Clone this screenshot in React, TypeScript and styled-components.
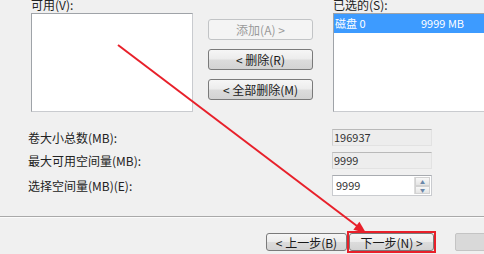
import React from "react";
import styled, { createGlobalStyle, css } from "styled-components";

const Global = createGlobalStyle`
  html, body { margin: 0; padding: 0; background: #f0f0f0; }
  body {
    font-family: "Noto Sans CJK SC", "DejaVu Sans", sans-serif;
    font-size: 12px;
    color: #1a1a1a;
  }
`;

const Frame = styled.div`
  position: relative;
  width: 484px;
  height: 254px;
  overflow: hidden;
  background: #f0f0f0;
  display: flex;
  flex-direction: column;
`;

const Top = styled.div`
  display: flex;
  margin-top: -4px;
  padding-left: 31px;
`;

const ListColumn = styled.div<{ $w: number }>`
  display: flex;
  flex-direction: column;
  width: ${(p) => p.$w}px;
  flex-shrink: 0;
`;

const Label = styled.div`
  height: 17px;
  line-height: 17px;
  white-space: nowrap;
  color: #222;
`;

const ListBox = styled.div`
  height: 99px;
  box-sizing: border-box;
  background: #fff;
  border: 1px solid #9fa3a8;
  border-right-color: #c9cbcf;
  border-bottom-color: #c9cbcf;
`;

const Row = styled.div`
  display: grid;
  grid-template-columns: 86px auto;
  height: 19px;
  line-height: 19px;
  background: #3d9bff;
  color: #fff;
  font-size: 11px;
  padding-left: 1px;
  white-space: nowrap;
`;

const ButtonColumn = styled.div`
  display: flex;
  flex-direction: column;
  gap: 9px;
  width: 105px;
  margin: 0 20px 0 15px;
  padding-top: 23px;
  flex-shrink: 0;
`;

const Btn = styled.div<{ $disabled?: boolean; $w?: number; $h?: number }>`
  box-sizing: border-box;
  height: ${(p) => p.$h ?? 21}px;
  ${(p) => p.$w && css`width: ${p.$w}px;`}
  border: 1px solid #7a7a7a;
  border-radius: 3px;
  background: linear-gradient(#f6f6f6 0%, #ececec 48%, #dcdcdc 52%, #d3d3d3 100%);
  display: flex;
  align-items: center;
  justify-content: center;
  white-space: nowrap;
  color: #1a1a1a;
  flex-shrink: 0;
  ${(p) =>
    p.$disabled &&
    css`
      border-color: #c2c4c6;
      background: #f4f4f4;
      color: #9a9a9a;
    `}
`;

const Lower = styled.div`
  display: grid;
  grid-template-columns: 304px 100px;
  grid-template-rows: 17px 17px 21px;
  row-gap: 6px;
  padding-left: 28px;
  margin-top: 17px;
  align-items: center;
`;

const FieldLabel = styled.div`
  white-space: nowrap;
  color: #222;
`;

const ReadOnly = styled.div`
  box-sizing: border-box;
  height: 17px;
  line-height: 15px;
  padding-left: 1px;
  background: #ededed;
  border: 1px solid #e2e2e2;
  border-top-color: #b9b9b9;
  border-left-color: #d0d0d0;
  font-size: 11px;
  color: #333;
`;

const SpinField = styled.div`
  box-sizing: border-box;
  height: 21px;
  display: flex;
  background: #fff;
  border: 1px solid #c9cbcf;
  border-top-color: #a8abb0;
`;

const SpinText = styled.div`
  flex: 1;
  line-height: 19px;
  padding-left: 3px;
  font-size: 11px;
  color: #333;
`;

const Spinner = styled.div`
  width: 15px;
  display: flex;
  flex-direction: column;
  border-left: 1px solid #dcdcdc;
  margin: 1px;
`;

const SpinHalf = styled.div`
  flex: 1;
  display: flex;
  align-items: center;
  justify-content: center;
  background: linear-gradient(#f8f8f8, #e4e4e4);
  border: 1px solid #d2d2d2;
  color: #6a86a8;
  font-size: 5px;
  line-height: 1;
`;

const Separator = styled.div`
  margin-top: 20px;
  height: 1px;
  background: #a9a9a9;
  border-bottom: 1px solid #fbfbfb;
`;

const Bottom = styled.div`
  display: flex;
  align-items: center;
  padding-left: 266px;
  margin-top: 13px;
`;

const Highlight = styled.div`
  border: 2px solid #e8202a;
  display: flex;
`;

const Cancel = styled.div`
  box-sizing: border-box;
  width: 60px;
  height: 18px;
  margin-left: 19px;
  background: #d9d9d9;
  border: 1px solid #c4c4c4;
  border-radius: 2px;
  flex-shrink: 0;
`;

const Overlay = styled.svg`
  position: absolute;
  left: 0;
  top: 0;
  pointer-events: none;
`;

export default function App() {
  return (
    <Frame>
      <Global />
      <Top>
        <ListColumn $w={162}>
          <Label>可用(V):</Label>
          <ListBox />
        </ListColumn>
        <ButtonColumn>
          <Btn $disabled>添加(A) &gt;</Btn>
          <Btn>&lt; 删除(R)</Btn>
          <Btn>&lt; 全部删除(M)</Btn>
        </ButtonColumn>
        <ListColumn $w={170}>
          <Label>已选的(S):</Label>
          <ListBox>
            <Row>
              <span>磁盘 0</span>
              <span>9999 MB</span>
            </Row>
          </ListBox>
        </ListColumn>
      </Top>
      <Lower>
        <FieldLabel>卷大小总数(MB):</FieldLabel>
        <ReadOnly>196937</ReadOnly>
        <FieldLabel>最大可用空间量(MB):</FieldLabel>
        <ReadOnly>9999</ReadOnly>
        <FieldLabel>选择空间量(MB)(E):</FieldLabel>
        <SpinField>
          <SpinText>9999</SpinText>
          <Spinner>
            <SpinHalf>▲</SpinHalf>
            <SpinHalf>▼</SpinHalf>
          </Spinner>
        </SpinField>
      </Lower>
      <Separator />
      <Bottom>
        <Btn $w={81} $h={18}>&lt; 上一步(B)</Btn>
        <Highlight>
          <Btn $w={85} $h={18}>下一步(N) &gt;</Btn>
        </Highlight>
        <Cancel />
      </Bottom>
      <Overlay width={484} height={254} viewBox="0 0 484 254">
        <line x1={118} y1={45} x2={357} y2={226} stroke="#e8202a" strokeWidth={2} />
        <polygon points="366,233 353.4,229.7 359.4,221.8" fill="#e8202a" />
      </Overlay>
    </Frame>
  );
}
